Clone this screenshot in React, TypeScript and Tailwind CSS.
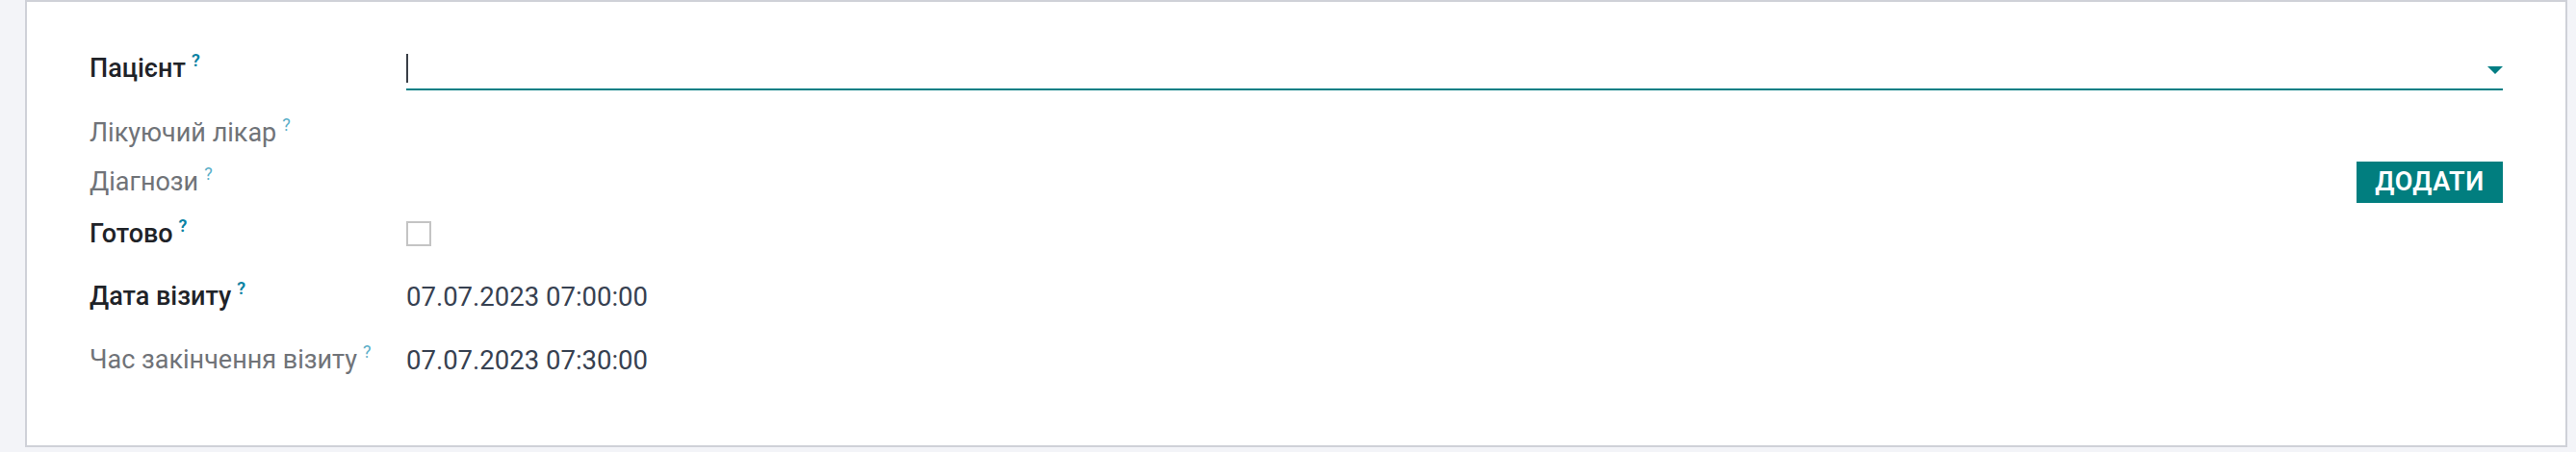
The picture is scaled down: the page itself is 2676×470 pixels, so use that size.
import React from 'react';

const font = { fontFamily: 'Roboto, "Noto Sans", sans-serif' };

const Help = ({ muted }: { muted?: boolean }) => (
  <span
    className={
      'ml-[6px] text-[18px] leading-none align-[11px] ' +
      (muted ? 'text-[#5aaec8] font-normal' : 'text-[#0a82a3] font-semibold')
    }
  >
    ?
  </span>
);

const Label = ({ text, muted }: { text: string; muted?: boolean }) => (
  <div className="w-[329px] shrink-0 leading-[39px] whitespace-nowrap">
    <span className={muted ? 'text-[#707378]' : 'text-[#1f2328] font-medium'}>{text}</span>
    <Help muted={muted} />
  </div>
);

export default function App() {
  return (
    <div
      className="w-[2676px] h-[470px] bg-[#f3f4f8] pl-[26px] pr-[9px] pb-[5px] flex text-[27px]"
      style={font}
    >
      <div className="flex-1 bg-white border-2 border-[#cfd1d8] flex flex-col pl-[65px] pr-[65px] pt-[50px]">
        {/* Пацієнт */}
        <div className="flex h-[42px]">
          <Label text="Пацієнт" />
          <div className="flex-1 flex items-center border-b-2 border-[#017e84] h-[42px]">
            <span className="w-[2px] h-[30px] bg-[#3a3f47] mt-[-2px]" />
            <div className="flex-1" />
            <svg width="16" height="8" viewBox="0 0 16 8" className="mt-[2px]">
              <path d="M0 0 H16 L8 8 Z" fill="#017e84" />
            </svg>
          </div>
        </div>

        {/* Лікуючий лікар */}
        <div className="flex h-[39px] mt-[25px]">
          <Label text="Лікуючий лікар" muted />
        </div>

        {/* Діагнози */}
        <div className="flex items-center h-[43px] mt-[10px]">
          <Label text="Діагнози" muted />
          <div className="flex-1 flex justify-end">
            <button className="h-[43px] w-[152px] bg-[#017e7f] text-white text-[27px] font-semibold tracking-[0.5px] leading-none flex items-center justify-center">
              ДОДАТИ
            </button>
          </div>
        </div>

        {/* Готово */}
        <div className="flex items-center h-[39px] mt-[13px]">
          <Label text="Готово" />
          <div className="w-[26px] h-[26px] border-2 border-[#c4c4c4] bg-white mt-[-1px]" />
        </div>

        {/* Дата візиту */}
        <div className="flex h-[39px] mt-[26px]">
          <Label text="Дата візиту" />
          <div className="leading-[39px] text-[27.5px] text-[#374151]">07.07.2023 07:00:00</div>
        </div>

        {/* Час закінчення візиту */}
        <div className="flex h-[39px] mt-[27px]">
          <Label text="Час закінчення візиту" muted />
          <div className="leading-[39px] text-[27.5px] text-[#374151]">07.07.2023 07:30:00</div>
        </div>
      </div>
    </div>
  );
}
